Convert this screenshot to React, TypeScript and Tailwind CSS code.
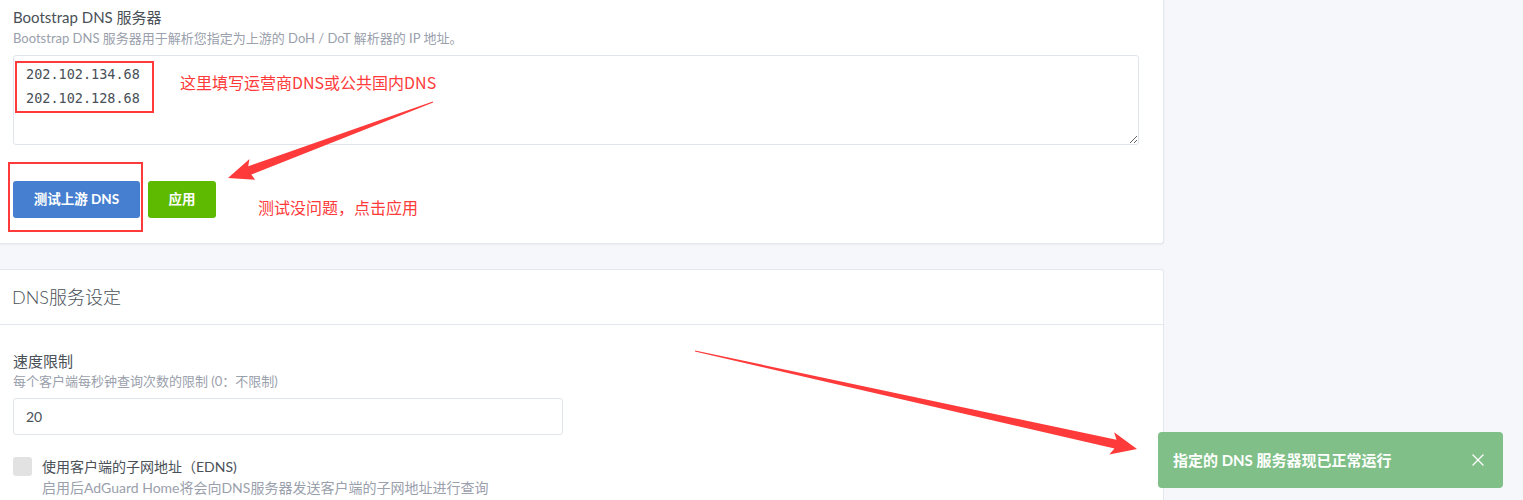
import { X } from "lucide-react";

const ui = "font-['Lato','Noto_Sans_CJK_SC',sans-serif]";

function Arrows() {
  // annotation arrows drawn over the screenshot
  return (
    <svg
      className="absolute inset-0 pointer-events-none"
      width="1523"
      height="500"
      viewBox="0 0 1523 500"
    >
      <polygon
        fill="#fe3a3a"
        points="432.8,101.5 248.2,166.2 249.5,159.1 228,178 255.1,179.7 251.3,174.6 433.2,102.5"
      />
      <polygon
        fill="#fe3a3a"
        points="695.1,350.5 1116.5,439.8 1114.1,432.2 1137,449 1109.3,454.6 1114.5,448.6 694.9,351.5"
      />
    </svg>
  );
}

export default function App() {
  return (
    <div className={`relative w-[1523px] h-[500px] overflow-hidden bg-[#f5f7fb] ${ui}`}>
      <div className="w-[1164px] flex flex-col gap-[25px]">
        {/* Bootstrap DNS card */}
        <div className="relative bg-white border border-t-0 border-l-0 border-[#e3e7ee] rounded-br-[3px] shadow-[0_1px_2px_rgba(0,0,0,0.05)] pl-[13px] pr-[24px] pt-[7px] pb-[25px]">
          <div className="text-[15px] leading-[20px] text-[#495057]">Bootstrap DNS 服务器</div>
          <div className="text-[13px] leading-[16px] text-[#9aa0ac] mt-[3px]">
            Bootstrap DNS 服务器用于解析您指定为上游的 DoH / DoT 解析器的 IP 地址。
          </div>
          <div className="relative mt-[9px]">
            <textarea
              readOnly
              value={"202.102.134.68\n202.102.128.68"}
              className="block w-full h-[90px] border border-[#e0e5ec] rounded-[3px] px-[12px] pt-[6px] font-['DejaVu_Sans_Mono',monospace] text-[13.5px] leading-[24px] text-[#495057] outline-none resize-y"
            />
            <div className="absolute left-[2px] top-[6px] w-[139px] h-[52px] border-2 border-[#fe3a3a] pointer-events-none" />
            <div className="absolute left-[167px] top-[17px] text-[16px] leading-[20px] text-[#fe3a3a] font-['Noto_Sans_CJK_SC',sans-serif]">
              这里填写运营商DNS或公共国内DNS
            </div>
          </div>
          <div className="relative flex items-center gap-[8px] mt-[36px]">
            <button className="w-[127px] h-[37px] rounded-[3px] bg-[#467fcf] text-white text-[13.5px] font-bold">
              测试上游 DNS
            </button>
            <button className="w-[68px] h-[37px] rounded-[3px] bg-[#5eba00] text-white text-[13.5px] font-bold">
              应用
            </button>
            <div className="absolute left-[-5px] top-[-19px] w-[135px] h-[70px] border-2 border-[#fe3a3a] pointer-events-none" />
            <div className="absolute left-[245px] top-[16px] text-[16px] leading-[20px] text-[#fe3a3a] font-['Noto_Sans_CJK_SC',sans-serif]">
              测试没问题，点击应用
            </div>
          </div>
        </div>

        {/* DNS service settings card */}
        <div className="bg-white border border-l-0 border-[#e3e7ee] rounded-tr-[3px] h-[260px]">
          <div className="h-[55px] flex items-center pl-[12px] border-b border-[#e3e7ee]">
            <span className="text-[18px] text-[#495057] font-light">DNS服务设定</span>
          </div>
          <div className="pl-[13px] pt-[26px]">
            <div className="text-[15px] leading-[20px] text-[#495057]">速度限制</div>
            <div className="text-[13px] leading-[16px] text-[#9aa0ac] mt-[2px]">
              每个客户端每秒钟查询次数的限制 (0：不限制)
            </div>
            <input
              readOnly
              value="20"
              className="block mt-[9px] w-[550px] h-[37px] border border-[#e0e5ec] rounded-[3px] px-[12px] text-[14px] text-[#495057] outline-none"
            />
            <div className="flex items-start gap-[10px] mt-[22px]">
              <div className="w-[19px] h-[19px] rounded-[3px] bg-[#e2e2e2]" />
              <div>
                <div className="text-[14px] leading-[20px] text-[#495057]">使用客户端的子网地址（EDNS)</div>
                <div className="text-[14px] leading-[22px] text-[#9aa0ac]">
                  启用后AdGuard Home将会向DNS服务器发送客户端的子网地址进行查询
                </div>
              </div>
            </div>
          </div>
        </div>
      </div>

      {/* toast */}
      <div className="absolute left-[1158px] top-[432px] w-[345px] h-[56px] rounded-[4px] bg-[#80bf88] flex items-center justify-between pl-[15px] pr-[15px]">
        <span className="text-white text-[15px] font-bold">指定的 DNS 服务器现已正常运行</span>
        <X className="w-[20px] h-[20px] text-white" strokeWidth={1.5} />
      </div>

      <Arrows />
    </div>
  );
}
